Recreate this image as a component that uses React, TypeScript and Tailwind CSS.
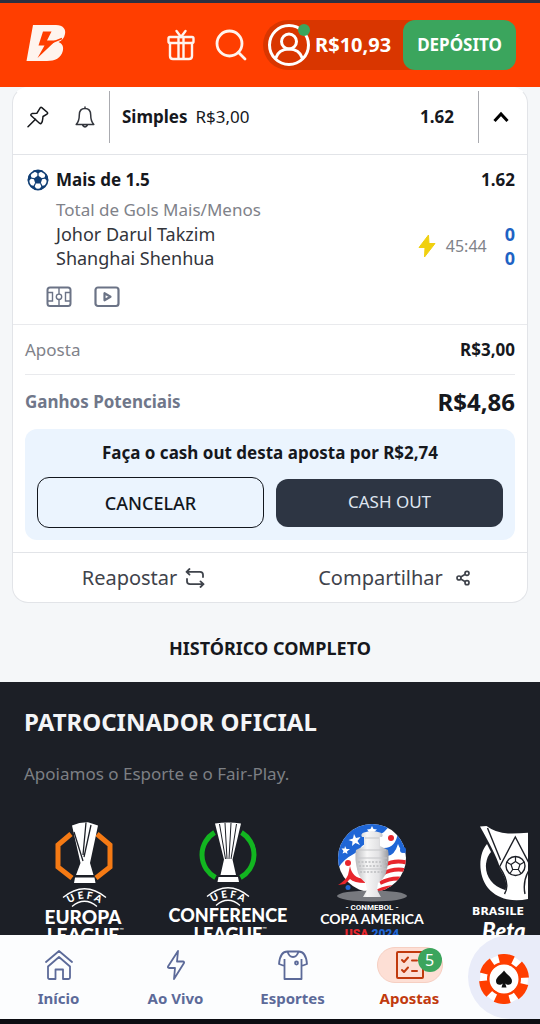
import type { ReactNode } from "react"
import { Share2 } from "lucide-react"

interface Sponsor {
  id: string
  name: string
  logo: ReactNode
}

interface NavItem {
  id: string
  label: string
  icon: ReactNode
  active?: boolean
  badge?: number
}

const BrandLogo = () => (
  <svg width="40" height="38" viewBox="0 0 40 38" aria-hidden="true">
    <path
      fill="#fff4ee"
      fillRule="evenodd"
      d="M7 1H30C37 1 40 5 39 10C38.300 14 36 16.500 32.500 18C36.500 19.500 37.800 23 36.800 27C35 34 29 37 21 37H0.500ZM17 7.500L12.500 21.500H18.500L11.500 34L30 16.500H21L25.500 7.500Z"
    />
    <path d="M21 20.500L36 14.500" stroke="#ff3e00" strokeWidth="1.500" />
  </svg>
)

const GiftIcon = () => (
  <svg width="28" height="32" viewBox="0 0 28 32" fill="none" stroke="#fff4ee" strokeWidth="2.400" strokeLinecap="round" strokeLinejoin="round" aria-hidden="true">
    <rect x="1.500" y="8" width="25" height="6" rx="1.500" />
    <path d="M3 14V27Q3 30 6 30H22Q25 30 25 27V14M11.500 8.500V29.500M16.500 8.500V29.500M14 8L9.500 2M14 8L18.500 2" />
  </svg>
)

const SearchIcon = () => (
  <svg width="32" height="32" viewBox="0 0 32 32" fill="none" stroke="#fff4ee" strokeWidth="2.800" strokeLinecap="round" aria-hidden="true">
    <circle cx="14.500" cy="14.500" r="12.500" />
    <path d="M23.500 23.500L30 30" />
  </svg>
)

const AvatarIcon = () => (
  <svg width="44" height="44" viewBox="0 0 44 44" fill="none" stroke="#fff" strokeWidth="3" aria-hidden="true">
    <circle cx="22" cy="22" r="19.500" />
    <circle cx="22" cy="18.500" r="7.500" />
    <path d="M8.500 35.500C10.500 29.500 15.500 26 22 26S33.500 29.500 35.500 35.500" />
    <circle cx="37" cy="7" r="6" fill="#3ba55d" stroke="none" />
  </svg>
)

const PinIcon = () => (
  <svg width="22" height="22" viewBox="0 0 22 22" fill="none" stroke="#16181c" strokeWidth="1.500" strokeLinecap="round" strokeLinejoin="round" aria-hidden="true">
    <path d="M13.200 1.800Q14 1 14.800 1.600L20.500 6.500Q21 7.500 20 8.100L16 10.500Q15.800 13 15.200 15.800Q14.200 18.500 12.500 17.200L4 9.500Q3.500 8 5 7.600L9.800 7.300Z" />
    <path d="M8.500 13.200L1 20.800" />
  </svg>
)

const BellIcon = () => (
  <svg width="20" height="22" viewBox="0 0 20 22" fill="none" stroke="#33363d" strokeWidth="1.500" strokeLinecap="round" strokeLinejoin="round" aria-hidden="true">
    <path d="M10 2.500C6 2.500 4.300 5.500 4.300 9C4.300 14 3.500 16 1.200 18.500H18.800C16.500 16 15.700 14 15.700 9C15.700 5.500 14 2.500 10 2.500ZM10 1V2.500" />
    <path d="M8 19.500Q10 22 12 19.500" strokeWidth="2" />
  </svg>
)

const BallIcon = () => (
  <svg width="22" height="22" viewBox="0 0 22 22" aria-hidden="true">
    <circle cx="11" cy="11" r="9.600" fill="#fff" stroke="#103e74" strokeWidth="1.600" />
    <path fill="#103e74" d="M11 6.500L15.300 9.600L13.700 14.600H8.300L6.700 9.600ZM6 1.800L11 4.600L16 1.800Q11 0 6 1.800ZM19 4.500L17.300 9L21 13Q22 8 19 4.500ZM3 4.500L4.700 9L1 13Q0 8 3 4.500ZM12 21L14.500 17L19 16Q17 20.500 12 21ZM10 21L7.500 17L3 16Q5 20.500 10 21Z" />
    <path stroke="#103e74" strokeWidth="1.200" d="M11 3.500V7M15 9.700L18.500 9M13.500 14.300L15 17.300M8.500 14.300L7 17.300M7 9.700L3.500 9" />
  </svg>
)

const PitchIcon = () => (
  <svg width="26" height="22" viewBox="0 0 26 22" fill="none" stroke="#6b7386" aria-hidden="true">
    <rect x="1.500" y="1.500" width="23" height="18.500" rx="2.500" strokeWidth="2" />
    <path d="M13 2V8M13 13.500V20M2 6.500H6.500V15H2M24 6.500H19.500V15H24" strokeWidth="1.400" />
    <circle cx="13" cy="10.800" r="2.700" strokeWidth="1.400" />
  </svg>
)

const PlayIcon = () => (
  <svg width="26" height="22" viewBox="0 0 26 22" fill="none" stroke="#6b7386" strokeWidth="2.200" strokeLinejoin="round" aria-hidden="true">
    <rect x="1.500" y="1.500" width="23" height="18.500" rx="2.500" />
    <path d="M10.500 7.200V14.300L16.500 10.800Z" />
  </svg>
)

const BoltIcon = () => (
  <svg width="18" height="24" viewBox="0 0 18 24" aria-hidden="true">
    <path fill="#f0d010" stroke="#f0d010" strokeLinejoin="round" d="M10.500 1L1 13.500H7L6.500 23L17 9.500H11Z" />
  </svg>
)

const RepeatIcon = () => (
  <svg width="20" height="20" viewBox="0 0 20 20" fill="none" stroke="#3f434b" strokeWidth="1.800" strokeLinecap="round" strokeLinejoin="round" aria-hidden="true">
    <path d="M4.500 1L1.500 3.800L4.500 6.600M1.500 3.800H15Q18 3.800 18 6.800V9M15.500 13.400L18.500 16.200L15.500 19M18.500 16.200H5Q2 16.200 2 13.200V11" />
  </svg>
)

const EuropaLogo = () => (
  <svg width="144" height="140" viewBox="0 0 144 140" aria-hidden="true">
    <path d="M59 24L46 35V57L60 68M85 24L98 35V57L84 68" fill="none" stroke="#f57a14" strokeWidth="5" />
    <path d="M60 15.500Q68 12 76 12.300L86 15.500L78 53L81.500 65H64L68.500 53Z" fill="#fff" />
    <path d="M62 22L71 51M74 12.500L71 45M79 15L72 47" stroke="#1c1f26" strokeWidth="1.300" />
    <path d="M63 67.500H82.500L83.500 73H62Z" fill="#fff" />
    <path d="M51 87.500Q72.500 70 94 87.500M60 96.500Q72.500 86 85 96.500" fill="none" stroke="#fff" strokeWidth="1.300" />
    <path id="uefa-europa" d="M50 99Q72.500 78 95 99" fill="none" />
    <text fill="#fff" fontSize="10" fontWeight="900" fontFamily="Lato, sans-serif">
      <textPath href="#uefa-europa" startOffset="50%" textAnchor="middle">U E F A</textPath>
    </text>
    <g fill="#fff" fontFamily="Lato, sans-serif" fontWeight="900" fontSize="19" textAnchor="middle">
      <text x="71" y="114">EUROPA</text>
      <text x="71" y="132">LEAGUE</text>
    </g>
    <text x="107" y="122" fill="#fff" fontSize="6" fontFamily="Lato, sans-serif">™</text>
  </svg>
)

const ConferenceLogo = () => (
  <svg width="144" height="140" viewBox="0 0 144 140" aria-hidden="true">
    <path d="M58.500 22.500A26 26 0 0 0 59.500 67.500M85.500 22.500A26 26 0 0 1 84.500 67.500" fill="none" stroke="#12b520" strokeWidth="5" />
    <path d="M59 13.500Q72 11.500 85 13.500L76.500 49.500L80 65H64.500L68 49.500Z" fill="#fff" />
    <path d="M63.500 14L69.500 49M69 13L71 49M75 13L73 49M80.500 14L75 49" stroke="#1c1f26" strokeWidth="1" />
    <path d="M62.500 67H82L83 72H61.500Z" fill="#fff" />
    <path d="M51 86.500Q72 69 93 86.500M60 95.500Q72 85 84 95.500" fill="none" stroke="#fff" strokeWidth="1.300" />
    <path id="uefa-conference" d="M49.500 98Q72 77 94.500 98" fill="none" />
    <text fill="#fff" fontSize="10" fontWeight="900" fontFamily="Lato, sans-serif">
      <textPath href="#uefa-conference" startOffset="50%" textAnchor="middle">U E F A</textPath>
    </text>
    <g fill="#fff" fontFamily="Lato, sans-serif" fontWeight="900" fontSize="18" textAnchor="middle">
      <text x="72" y="112">CONFERENCE</text>
      <text x="72" y="131">LEAGUE</text>
    </g>
    <text x="106" y="121" fill="#fff" fontSize="6" fontFamily="Lato, sans-serif">™</text>
  </svg>
)

const CopaLogo = () => (
  <svg width="144" height="140" viewBox="0 0 144 140" aria-hidden="true">
    <defs>
      <clipPath id="copa-disc">
        <circle cx="72" cy="48" r="34" />
      </clipPath>
      <linearGradient id="copa-cup">
        <stop offset="0" stopColor="#b9babd" />
        <stop offset="0.350" stopColor="#f7f7f7" />
        <stop offset="0.700" stopColor="#e2e2e4" />
        <stop offset="1" stopColor="#98999d" />
      </linearGradient>
    </defs>
    <g clipPath="url(#copa-disc)">
      <rect x="38" y="14" width="68" height="68" fill="#fff" />
      <path d="M36 54V12H98Q90 14 84 22L62 36Q58 42 52 45Q42 50 36 62Z" fill="#1f66d6" />
      <path d="M98 22Q106 28 106 44Q100 40 98 34Q94 48 84 46V38Q96 38 98 22Z" fill="#1f66d6" />
      <path d="M84 55Q96 49 108 53M82 64Q95 57 108 61M80 73Q94 66 108 70M78 81Q92 75 104 78" fill="none" stroke="#e8262d" strokeWidth="4" />
    </g>
    <path d="M54 24L56 28L60.500 27L57.500 31L60 35L55.500 33L52 36L52.500 31.500L48.500 30L53 28.500ZM72 16L73.500 19L77 19.500L74 22H69L67 19.500L70.500 19ZM45 36L46.500 39L50 39L47 41.500L47.500 44L45 42.500L42.500 43.500L43.500 41L41.500 38.500L44.500 38.500Z" fill="#fff" />
    <circle cx="91" cy="28" r="3" fill="#e8262d" />
    <circle cx="103" cy="40" r="3" fill="#1f66d6" />
    <circle cx="48" cy="53" r="3" fill="#e8262d" />
    <ellipse cx="72" cy="86" rx="35" ry="5.500" fill="#77797e" />
    <path d="M50 56Q52 68 64 69L65 73Q54 73 50 69L45 74L38 75Q46 70 48 65Z" fill="#e8262d" />
    <circle cx="48" cy="77.500" r="2.500" fill="#1f66d6" />
    <path d="M64 27H62Q60 24 64 22.500Q72 19.500 80 22.500Q84 24 82 27H80V36L88 40Q90 48 86 63Q83 70 78 73L77 80L81 87H63L67 80L66 73Q61 70 58 63Q54 48 56 40L64 36Z" fill="url(#copa-cup)" />
    <path d="M65 28H79M58 40H86M57 48H87M57 59H87" stroke="#c4c5c8" strokeWidth="1" />
    <path d="M58 52H87M59 56H86M60 62H85" stroke="#bcbdc0" strokeWidth="1.500" strokeDasharray="2 1.500" />
    <g textAnchor="middle" fill="#fff">
      <text x="72" y="100" fontSize="8" fontWeight="700" fontFamily="Roboto, sans-serif">- CONMEBOL -</text>
      <text x="72" y="114" fontSize="14" fontWeight="700" fontFamily="Lato, sans-serif">COPA AMERICA</text>
      <text x="72" y="128" fontSize="12" fontWeight="900" fontFamily="Roboto, sans-serif">
        <tspan fill="#e8262d">USA</tspan> <tspan fill="#1f66d6">2024</tspan>
      </text>
    </g>
  </svg>
)

const BrasileiraoLogo = () => (
  <svg width="144" height="140" viewBox="0 0 144 140" aria-hidden="true">
    <path d="M43 34C34 44 34 66 44 78C54 90 70 92 84 89V80H61C48 76 41 66 42 54Q43 46 47 42Z" fill="#fff" />
    <path d="M36 16.500L42.500 16Q52 23 64 23.500Q78 24 98 21L87 57Q84 66 86 84L60 83.500Q66 74 56 59Q55 50 36 16.500Z" fill="#fff" />
    <path d="M43.500 18L56.500 50M55.500 57L71.300 27L87 57M55.500 57Q67 74 60.500 84M87 57Q78 70 81 84" fill="none" stroke="#1c1f26" strokeWidth="1.400" />
    <circle cx="71.500" cy="56" r="9.500" fill="#fff" stroke="#1c1f26" strokeWidth="1.400" />
    <path d="M71.500 51.500L76 54.500L74.300 59.500H68.700L67 54.500ZM71.500 51.500V47M76 54.500L80.500 52M74.300 59.500L77 63.500M68.700 59.500L66 63.500M67 54.500L62.500 52" fill="none" stroke="#1c1f26" strokeWidth="1.200" />
    <text x="28" y="105" fill="#fff" fontSize="11" fontWeight="700" fontFamily="DejaVu Sans, sans-serif">BRASILE</text>
    <text x="38" y="129" fill="#fff" fontSize="22" fontWeight="900" fontStyle="italic" fontFamily="Lato, sans-serif">Beta</text>
  </svg>
)

const HomeIcon = () => (
  <svg width="28" height="32" viewBox="0 0 28 32" fill="none" stroke="#5c6a99" strokeWidth="1.800" strokeLinecap="round" strokeLinejoin="round" aria-hidden="true">
    <path d="M1 13L14 2L27 13M3 17.500L14 8L25 17.500V28.500Q25 30 23.500 30H18V20.500H10.500V30H4.500Q3 30 3 28.500Z" />
  </svg>
)

const LiveIcon = () => (
  <svg width="20" height="32" viewBox="0 0 20 32" fill="none" stroke="#5c6a99" strokeWidth="1.800" strokeLinejoin="round" aria-hidden="true">
    <path d="M12 2L2 17.500Q1.500 19 3 19H9L8 30L18 14Q18.500 12.500 17 12.500H11Z" />
  </svg>
)

const ShirtIcon = () => (
  <svg width="32" height="32" viewBox="0 0 32 32" fill="none" stroke="#5c6a99" strokeWidth="1.800" strokeLinejoin="round" aria-hidden="true">
    <path d="M10.500 2.500H21.500Q29 2.500 30 15L24.500 17V30H7.500V17L2 15Q3 2.500 10.500 2.500ZM10.500 2.500Q12 8 16 8T21.500 2.500M7.500 10V17M24.500 10V17" />
    <circle cx="19.500" cy="14" r="1.500" />
  </svg>
)

const TicketIcon = () => (
  <svg width="28" height="28" viewBox="0 0 28 28" fill="none" stroke="#c13a0e" strokeWidth="2" strokeLinecap="round" strokeLinejoin="round" aria-hidden="true">
    <rect x="1" y="1" width="26" height="26" rx="1" />
    <path d="M6 9L8 11L12 6.500M6 19L8 21L12 16.500M16 9.500H21M16 20H21" />
  </svg>
)

const ChipIcon = () => (
  <svg width="50" height="50" viewBox="0 0 50 50" aria-hidden="true">
    <circle cx="25" cy="25" r="24" fill="#fff" />
    <circle cx="25" cy="25" r="20" fill="none" stroke="#ff3e00" strokeWidth="10" strokeDasharray="13.944 7" transform="rotate(14 25 25)" />
    <circle cx="25" cy="25" r="15.500" fill="none" stroke="#ff3e00" strokeWidth="3" />
    <circle cx="25" cy="25" r="14.500" fill="#fff" />
    <path fill="#111" d="M25 16.500C27 20 33 23 33 27C33 31 28.500 32 26.300 29.500L27.500 33.500H22.500L23.700 29.500C21.500 32 17 31 17 27C17 23 23 20 25 16.500Z" />
  </svg>
)

const sponsors: Sponsor[] = [
  { id: "europa", name: "UEFA Europa League", logo: <EuropaLogo /> },
  { id: "conference", name: "UEFA Conference League", logo: <ConferenceLogo /> },
  { id: "copa", name: "Copa America", logo: <CopaLogo /> },
  { id: "brasileirao", name: "Brasileirão Betano", logo: <BrasileiraoLogo /> },
]

const navItems: NavItem[] = [
  { id: "inicio", label: "Início", icon: <HomeIcon /> },
  { id: "ao-vivo", label: "Ao Vivo", icon: <LiveIcon /> },
  { id: "esportes", label: "Esportes", icon: <ShirtIcon /> },
  { id: "apostas", label: "Apostas", icon: <TicketIcon />, active: true, badge: 5 },
]

function Header() {
  return (
    <header className="flex h-[87px] shrink-0 items-center border-t-[3px] border-[#2b3040] bg-[#ff3e00] pl-[26px] pr-6">
      <a href="#" aria-label="Página inicial" className="pb-1">
        <BrandLogo />
      </a>
      <div className="ml-auto flex items-center">
        <button aria-label="Presentes" className="mr-5">
          <GiftIcon />
        </button>
        <button aria-label="Buscar" className="mr-4">
          <SearchIcon />
        </button>
        <div className="flex h-[50px] items-center rounded-l-[25px] rounded-r-2xl bg-[#d93600]">
          <button className="flex items-center gap-1 pl-1 pr-3 text-xl font-bold text-white">
            <AvatarIcon />
            R$10,93
          </button>
          <button className="h-full rounded-xl bg-[#3ba55d] px-[14px] text-[17px] font-bold text-white">DEPÓSITO</button>
        </div>
      </div>
    </header>
  )
}

function BetCard() {
  return (
    <article className="mx-3 rounded-2xl border border-[#e2e4e8] border-t-white bg-white">
      {/* Card header */}
      <div className="flex h-[67px] items-center border-b border-[#e2e4e8] pb-2">
        <button aria-label="Fixar" className="ml-[14px]">
          <PinIcon />
        </button>
        <button aria-label="Notificações" className="ml-[26px]">
          <BellIcon />
        </button>
        <div className="ml-[14px] flex h-[52px] flex-1 items-center justify-between border-x border-[#aaabb0] pl-3 pr-6 text-[17px]">
          <p className="flex gap-2">
            <b>Simples</b>
            <span>R$3,00</span>
          </p>
          <b>1.62</b>
        </div>
        <button aria-label="Recolher" className="flex w-12 justify-center pr-1">
          <svg width="16" height="12" viewBox="0 0 16 12" fill="none" stroke="#000" strokeWidth="3" aria-hidden="true">
            <path d="M1.500 10L8 3L14.500 10" />
          </svg>
        </button>
      </div>

      {/* Selection */}
      <div className="h-[170px] border-b border-[#e9eaed] pl-[14px] pr-3 pt-3">
        <div className="flex items-center gap-[7px] text-[17px] font-bold">
          <BallIcon />
          <h2>Mais de 1.5</h2>
          <span className="ml-auto">1.62</span>
        </div>
        <div className="mt-[5px] pl-[29px] text-[17px] leading-6 text-[#33353b]">
          <p className="text-[#808289]">Total de Gols Mais/Menos</p>
          <div className="flex items-center">
            <div className="text-lg leading-6">
              <p>Johor Darul Takzim</p>
              <p>Shanghai Shenhua</p>
            </div>
            <div className="ml-auto flex items-center gap-[10px] text-base text-[#808289]">
              <BoltIcon />
              45:44
            </div>
            <div className="ml-[18px] text-lg leading-6 font-bold text-[#1e63c4]">
              <p>0</p>
              <p>0</p>
            </div>
          </div>
        </div>
        <div className="mt-4 flex gap-[22px] pl-[19px]">
          <button aria-label="Campo ao vivo">
            <PitchIcon />
          </button>
          <button aria-label="Assistir">
            <PlayIcon />
          </button>
        </div>
      </div>

      {/* Amounts */}
      <dl className="px-3 text-[17px]">
        <div className="flex h-[50px] items-center justify-between border-b border-[#e9eaed]">
          <dt className="text-[#808289]">Aposta</dt>
          <dd className="font-bold">R$3,00</dd>
        </div>
        <div className="flex h-[54px] items-center justify-between">
          <dt className="font-bold text-[#70778a]">Ganhos Potenciais</dt>
          <dd className="text-2xl font-bold">R$4,86</dd>
        </div>
      </dl>

      <div className="mx-3 mb-3 rounded-xl bg-[#ebf4fe] p-3 text-center">
        <p className="text-[17px] leading-6 font-bold">Faça o cash out desta aposta por R$2,74</p>
        <div className="mt-3 grid grid-cols-2 items-center gap-3 text-lg">
          <button className="h-[51px] rounded-xl border border-[#12161d] font-medium text-[#12161d]">CANCELAR</button>
          <button className="h-12 rounded-xl bg-[#2d3543] text-[17px] text-[#dfe5f0]">CASH OUT</button>
        </div>
      </div>

      <div className="grid h-[50px] grid-cols-2 border-t border-[#e2e4e8] text-xl text-[#3f434b]">
        <button className="flex items-center justify-center gap-2 pl-1">
          Reapostar
          <RepeatIcon />
        </button>
        <button className="flex items-center justify-center gap-3 pr-2">
          Compartilhar
          <Share2 size={16} strokeWidth={2.5} />
        </button>
      </div>
    </article>
  )
}

function SponsorFooter() {
  return (
    <footer className="bg-[#1c1f26] pt-6">
      <h2 className="px-6 text-2xl leading-8 font-bold text-[#f4f5f7]">PATROCINADOR OFICIAL</h2>
      <p className="mt-6 px-6 text-[17px] leading-6 text-[#7d7f84]">Apoiamos o Esporte e o Fair-Play.</p>
      <ul className="mx-3 mt-6 flex overflow-hidden">
        {sponsors.map((sponsor) => (
          <li key={sponsor.id} className="w-36 shrink-0" aria-label={sponsor.name}>
            {sponsor.logo}
          </li>
        ))}
      </ul>
    </footer>
  )
}

function BottomNav() {
  return (
    <nav className="flex h-[89px] shrink-0 overflow-hidden border-b-[5px] border-[#0c0d12] bg-[#fcfdfe]">
      {navItems.map((item) => (
        <a
          key={item.id}
          href="#"
          className={`flex flex-1 flex-col items-center pt-3 text-[15px] leading-5 font-bold ${item.active ? "text-[#c13a0e]" : "text-[#5c6a99]"}`}
        >
          {item.active ? (
            <span className="relative flex h-9 w-[66px] items-center justify-center rounded-full border border-[#f6cfc2] bg-[#fddfd5]">
              {item.icon}
              <span className="absolute right-0 top-0 flex size-6 items-center justify-center rounded-full bg-[#3ba55d] text-base font-normal text-white">
                {item.badge}
              </span>
            </span>
          ) : (
            <span className="flex h-9 items-center">{item.icon}</span>
          )}
          <span className="mt-[5px]">{item.label}</span>
        </a>
      ))}
      <button aria-label="Cassino" className="flex w-[72px] items-center justify-center rounded-l-full bg-[#e9ecf9] pt-1">
        <ChipIcon />
      </button>
    </nav>
  )
}

export default function App() {
  return (
    <div className="flex h-screen flex-col bg-[#f5f7f9] font-['Noto_Sans',sans-serif] text-[#16181d]">
      <Header />
      <main className="min-h-0 flex-1 overflow-y-auto [scrollbar-width:none]">
        <BetCard />
        <div className="flex h-[79px] items-center justify-center pt-[10px]">
          <a href="#" className="text-lg font-bold">
            HISTÓRICO COMPLETO
          </a>
        </div>
        <SponsorFooter />
      </main>
      <BottomNav />
    </div>
  )
}
